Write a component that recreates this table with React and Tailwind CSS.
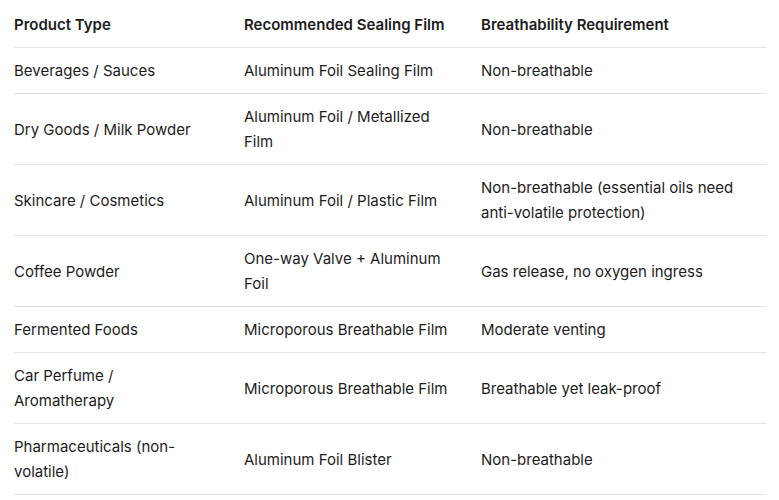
const rows = [
  ["Beverages / Sauces", "Aluminum Foil Sealing Film", "Non-breathable"],
  ["Dry Goods / Milk Powder", "Aluminum Foil / Metallized Film", "Non-breathable"],
  [
    "Skincare / Cosmetics",
    "Aluminum Foil / Plastic Film",
    "Non-breathable (essential oils need anti-volatile protection)",
  ],
  ["Coffee Powder", "One-way Valve + Aluminum Foil", "Gas release, no oxygen ingress"],
  ["Fermented Foods", "Microporous Breathable Film", "Moderate venting"],
  ["Car Perfume / Aromatherapy", "Microporous Breathable Film", "Breathable yet leak-proof"],
  ["Pharmaceuticals (non-volatile)", "Aluminum Foil Blister", "Non-breathable"],
];

const Row = ({ cells, head }) => (
  <div
    className={`grid grid-cols-[230px_237px_1fr] items-center border-b border-[#e3e3e3] pb-[10px] leading-[25px] ${
      head ? "font-semibold pt-[11px]" : "pt-[10px]"
    }`}
  >
    <div className="pr-[33px]">{cells[0]}</div>
    <div className="pr-[27px]">{cells[1]}</div>
    <div className="pr-2">{cells[2]}</div>
  </div>
);

export default function App() {
  return (
    <div className="min-h-screen bg-white pt-[1px] pl-[14px] pr-[13px] text-[15px] text-[#1c1c1c] font-['Inter',sans-serif]">
      <Row
        head
        cells={["Product Type", "Recommended Sealing Film", "Breathability Requirement"]}
      />
      {rows.map((r) => (
        <Row key={r[0]} cells={r} />
      ))}
    </div>
  );
}
